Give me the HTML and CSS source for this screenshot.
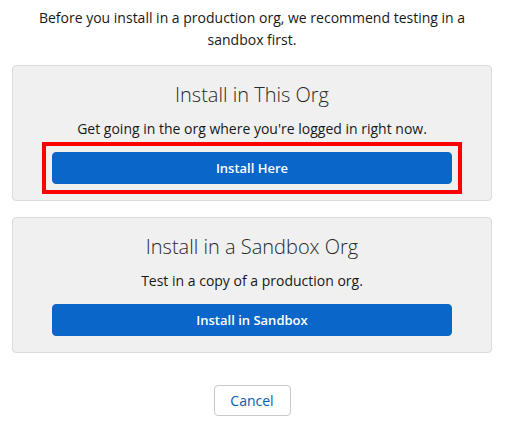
FILE: index.html
```html
<!DOCTYPE html>
<html lang="en">
<head>
<meta charset="utf-8">
<title>Install Package</title>
<link rel="stylesheet" href="styles.css">
</head>
<body>
<main class="page">
  <p class="intro">Before you install in a production org, we recommend testing in a sandbox first.</p>
  <section class="card">
    <h2 class="card-title">Install in This Org</h2>
    <p class="card-text">Get going in the org where you're logged in right now.</p>
    <div class="highlight">
      <button class="btn-brand" type="button">Install Here</button>
    </div>
  </section>
  <section class="card">
    <h2 class="card-title">Install in a Sandbox Org</h2>
    <p class="card-text">Test in a copy of a production org.</p>
    <button class="btn-brand" type="button">Install in Sandbox</button>
  </section>
  <div class="footer">
    <button class="btn-neutral" type="button">Cancel</button>
  </div>
</main>
</body>
</html>
```
FILE: styles.css
```css
* { box-sizing: border-box; }
html, body { margin: 0; padding: 0; background: #ffffff; }
body {
  font-family: "Open Sans", "Liberation Sans", sans-serif;
  color: #181818;
  font-size: 14px;
}
.page {
  display: flex;
  flex-direction: column;
  gap: 16px;
  padding: 7px 18px 0 12px;
}
.intro {
  margin: 0 0 -2px;
  padding: 0 16px;
  text-align: center;
  line-height: 22px;
  font-size: 14px;
}
.card {
  display: flex;
  flex-direction: column;
  align-items: center;
  background: #f0f0f0;
  border: 1px solid #dddbda;
  border-radius: 4px;
  padding: 15px 39px 16px;
}
.card-title {
  margin: 0;
  font-size: 20px;
  font-weight: 300;
  line-height: 28px;
  color: #2b2826;
}
.card-text {
  margin: 10px 0 13px;
  line-height: 20px;
  font-size: 14px;
}
.highlight {
  align-self: stretch;
  margin: -10px -10px;
  padding: 6px;
  border: 4px solid #ff0000;
  display: flex;
}
.btn-brand {
  width: 100%;
  height: 32px;
  border: 1px solid #0a66c8;
  background: #0a66c8;
  color: #ffffff;
  border-radius: 4px;
  font-family: inherit;
  font-size: 13px;
  font-weight: 600;
}
.footer {
  display: flex;
  justify-content: center;
  padding-top: 16px;
}
.btn-neutral {
  width: 77px;
  height: 31px;
  background: #ffffff;
  border: 1px solid #c9c9c9;
  border-radius: 4px;
  color: #0b5cab;
  font-family: inherit;
  font-size: 14px;
}
```
